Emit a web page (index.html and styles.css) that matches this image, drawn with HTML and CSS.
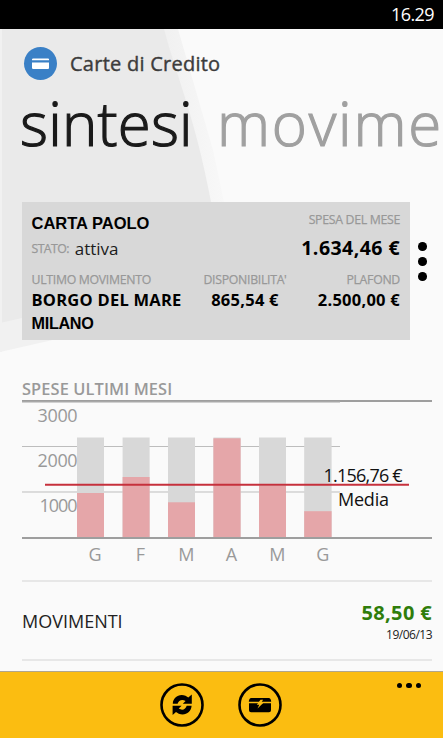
FILE: index.html
```
<!DOCTYPE html>
<html lang="it">
<head>
    <meta charset="UTF-8">
    <meta name="viewport" content="width=device-width, initial-scale=1.0">
    <title>Carte di Credito</title>
    <link rel="stylesheet" href="styles.css">
</head>
<body>

<div class="status-bar">16.29</div>

<div class="content">
    <svg class="backdrop" width="443" height="642" viewBox="0 29 443 642">
        <defs>
            <linearGradient id="fade" x1="0" x2="1" y1="0" y2="0">
                <stop offset=".75" stop-color="#f1f1f1"/>
                <stop offset="1" stop-color="#f8f8f8"/>
            </linearGradient>
        </defs>
        <path d="M0 29H178L213 150L224 202V301L0 352Z" fill="url(#fade)"/>
        <path d="M0 29H164C176 75 196 120 211 202V275L0 323Z" fill="#eaeaea"/>
        <path d="M0 29H2V352H0Z" fill="#f1f1f1"/>
    </svg>

    <div class="header">
        <svg class="header-icon" width="34" height="34" viewBox="0 0 34 34">
            <circle cx="17.5" cy="16.5" r="16.5" fill="#3a80c6"/>
            <path d="M10.3 11.5H25Q26 11.5 26 12.3V13.3H9V12.5Q9 11.5 10.3 11.5ZM9 15.6H26V21Q26 22 25 22H10.3Q9 22 9 21Z" fill="#fff"/>
        </svg>
        <span>Carte di Credito</span>
    </div>

    <div class="pivot">
        <span class="pivot-active">sintesi</span>
        <span class="pivot-next">movime</span>
    </div>

    <div class="card-row">
        <div class="card">
            <div class="card-top">
                <div>
                    <div class="card-name">CARTA PAOLO</div>
                    <div class="card-state"><span class="label state-label">STATO:</span><span>attiva</span></div>
                </div>
                <div class="right">
                    <div class="label label-month">SPESA DEL MESE</div>
                    <div class="amount">1.634,46 €</div>
                </div>
            </div>
            <div class="card-bottom">
                <div>
                    <div class="label">ULTIMO MOVIMENTO</div>
                    <div class="value">BORGO DEL MARE</div>
                    <div class="value city">MILANO</div>
                </div>
                <div class="center">
                    <div class="label">DISPONIBILITA'</div>
                    <div class="value">865,54 €</div>
                </div>
                <div class="right">
                    <div class="label">PLAFOND</div>
                    <div class="value">2.500,00 €</div>
                </div>
            </div>
        </div>
        <div class="card-menu"><i></i><i></i><i></i></div>
    </div>

    <h2>SPESE ULTIMI MESI</h2>
    <svg class="chart" width="443" height="180" viewBox="0 400 443 180">
        <path class="grid" d="M22 446.5H340M22 492H340"/>
        <path class="axis" d="M22 401H432M22 538H432"/>
        <path class="grid" d="M22 402.2H340"/>
        <g class="bar">
            <rect x="77" y="437.5" width="27" height="99.5"/>
            <rect x="122.6" y="437.5" width="27" height="99.5"/>
            <rect x="168" y="437.5" width="27" height="99.5"/>
            <rect x="213.4" y="437.5" width="27.2" height="99.5"/>
            <rect x="259" y="437.5" width="27" height="99.5"/>
            <rect x="304.2" y="437.5" width="27.4" height="99.5"/>
        </g>
        <g class="spent">
            <rect x="77" y="493" width="27" height="44"/>
            <rect x="122.6" y="477" width="27" height="60"/>
            <rect x="168" y="502.3" width="27" height="34.7"/>
            <rect x="213.4" y="438.3" width="27.2" height="98.7"/>
            <rect x="259" y="486" width="27" height="51"/>
            <rect x="304.2" y="511.2" width="27.4" height="25.8"/>
        </g>
        <path class="average" d="M45 484.8H409"/>
        <g class="scale">
            <text x="37.6" y="421.5" textLength="40">3000</text>
            <text x="37.6" y="467" textLength="40">2000</text>
            <text x="39.6" y="512.4" textLength="38">1000</text>
        </g>
        <g class="months">
            <text x="95" y="561.3">G</text>
            <text x="140.5" y="561.3">F</text>
            <text x="186.3" y="561.3">M</text>
            <text x="231.5" y="561.3">A</text>
            <text x="277.3" y="561.3">M</text>
            <text x="322.8" y="561.3">G</text>
        </g>
        <g class="average-text">
            <text x="323.6" y="481.5" textLength="79">1.156,76 €</text>
            <text x="338" y="506" textLength="51">Media</text>
        </g>
    </svg>

    <div class="movements">
        <span class="movements-title">MOVIMENTI</span>
        <div class="right">
            <div class="movements-amount">58,50 €</div>
            <div class="movements-date">19/06/13</div>
        </div>
    </div>
</div>

<div class="app-bar">
    <svg width="44" height="44" viewBox="0 0 44 44">
        <circle class="ring" cx="22" cy="22" r="20.5"/>
        <path d="M12.8 20.8C13 14.5 19 10.4 25.5 12.8L28.3 14.6L31.8 11.6V20.8H22.8L25.6 18C22 15.6 18.6 17.3 17.6 20.8Z"/>
        <path d="M31.6 22.8C31.3 29.1 25.3 33.2 18.8 30.8L16 29L12.6 32V22.8H21.6L18.7 25.6C22.4 28 25.8 26.3 26.7 22.8Z"/>
    </svg>
    <svg width="44" height="44" viewBox="0 0 44 44">
        <circle class="ring" cx="22" cy="22" r="20.5"/>
        <path d="M13.3 15H30.7Q33 15 33.2 18.8H10.8Q11 15 13.3 15ZM11 20.2H33V27.3Q33 29.3 31 29.3H13Q11 29.3 11 27.3Z"/>
        <path class="bolt" d="M22.5 16.8H25.1L23.4 19.6H25.8L19.5 25.5L21.3 21.7H18.8Z"/>
    </svg>
    <div class="more"><i></i><i></i><i></i></div>
</div>

</body>
</html>
```
FILE: styles.css
```
body {
    width: 443px;
    height: 738px;
    margin: 0;
    overflow: hidden;
    background: #fafafa;
    color: #000;
    font-family: "Open Sans", "Noto Sans", sans-serif;
}
.status-bar {
    box-sizing: border-box;
    height: 29px;
    padding-right: 9px;
    background: #000;
    color: #fff;
    font-size: 18px;
    letter-spacing: -.6px;
    line-height: 28px;
    text-align: right;
}
.content {
    position: relative;
    height: 642px;
    overflow: hidden;
}
/* faded shape that lies under the whole page */
.backdrop {
    position: absolute;
    top: 0;
    left: 0;
    z-index: -1;
}
.header {
    display: flex;
    align-items: center;
    gap: 13px;
    height: 34px;
    padding: 18px 0 0 23px;
    color: #3c3c3c;
    font-size: 20px;
    letter-spacing: .25px;
    line-height: 36px;
    -webkit-text-stroke: .4px #3c3c3c;
}
.header-icon {
    flex: none;
}
.pivot {
    display: flex;
    gap: 24px;
    height: 80px;
    margin-top: 2px;
    padding-left: 20px;
    font-size: 60px;
    font-weight: 300;
    line-height: 80px;
    white-space: nowrap;
}
.pivot-active {
    color: #1a1a1a;
    letter-spacing: .2px;
    -webkit-text-stroke: 1.2px #1a1a1a;
}
.pivot-next {
    color: #a0a0a0;
    letter-spacing: 1.8px;
    -webkit-text-stroke: 1.2px #a0a0a0;
}
.card-row {
    display: flex;
    align-items: center;
    margin: 38.5px 0 0 22px;
}
.card {
    box-sizing: border-box;
    width: 387.5px;
    height: 138px;
    padding: 9.5px 9.5px 0;
    background: #d8d8d8;
}
.card-top {
    display: flex;
    justify-content: space-between;
    height: 60.5px;
}
.card-bottom {
    display: grid;
    grid-template-columns: 171.5px 84px 1fr;
    white-space: nowrap;
}
.right {
    text-align: right;
}
.center {
    text-align: center;
}
.label {
    color: #989898;
    font-size: 12.3px;
    letter-spacing: -.3px;
    line-height: 16px;
    -webkit-text-stroke: .25px #989898;
}
.card-name {
    font-family: "Liberation Sans", Arial, sans-serif;
    font-size: 16.5px;
    font-weight: bold;
    line-height: 24px;
}
.card-state {
    display: flex;
    gap: 6px;
    color: #1c1c1c;
    font-size: 17px;
    line-height: 27px;
}
.state-label {
    letter-spacing: -.6px;
    line-height: 27px;
}
.amount {
    margin-top: 7px;
    font-size: 19.5px;
    font-weight: bold;
    letter-spacing: .45px;
    line-height: 25px;
}
.label-month {
    padding-top: 1px;
}
.value {
    font-size: 16.5px;
    font-weight: bold;
    letter-spacing: .25px;
    line-height: 24.4px;
}
.city {
    font-family: "Liberation Sans", Arial, sans-serif;
    font-size: 16.2px;
    letter-spacing: -.3px;
    line-height: 23px;
}
.card-menu {
    display: flex;
    flex-direction: column;
    gap: 6px;
    margin: -18px 0 0 8.5px;
}
.card-menu i {
    width: 8.7px;
    height: 8.7px;
    border-radius: 50%;
    background: #000;
}
h2 {
    height: 24px;
    margin: 37px 0 0 22px;
    color: #999;
    font-size: 16.4px;
    font-weight: 600;
    letter-spacing: .1px;
    line-height: 24px;
}
.chart {
    display: block;
    margin-top: -.5px;
    font-size: 18px;
}
.grid {
    fill: none;
    stroke: #bdbdbd;
}
.axis {
    fill: none;
    stroke: #9e9e9e;
    stroke-width: 2;
}
.bar {
    fill: #d8d8d8;
}
.spent {
    fill: #e5a6a9;
}
.average {
    stroke: #c6303c;
    stroke-width: 2;
}
.scale {
    fill: #999;
}
.months {
    fill: #999;
    text-anchor: middle;
}
.average-text {
    fill: #111;
}
.movements {
    box-sizing: border-box;
    display: flex;
    align-items: center;
    justify-content: space-between;
    width: 410px;
    height: 81px;
    margin-left: 22px;
    border-top: 2px solid #e7e7e7;
    border-bottom: 2px solid #e7e7e7;
}
.movements-title {
    color: #222;
    font-size: 18px;
}
.movements-amount {
    padding-top: 4px;
    color: #2f7d0b;
    font-size: 20px;
    font-weight: bold;
    letter-spacing: .35px;
    line-height: 25px;
}
.movements-date {
    color: #222;
    font-size: 12px;
    letter-spacing: -.5px;
    line-height: 20px;
}
.app-bar {
    box-sizing: border-box;
    display: flex;
    gap: 34px;
    height: 67px;
    padding: 11px 0 0 160px;
    border-top: 1px solid #b0a68c;
    background: #fbbd11;
}
.ring {
    fill: none;
    stroke: #000;
    stroke-width: 2.6;
}
.bolt {
    fill: #fbbd11;
}
.more {
    display: flex;
    gap: 4px;
    margin: 0 0 0 81px;
}
.more i {
    width: 5.4px;
    height: 5.4px;
    border-radius: 50%;
    background: #000;
}
```
